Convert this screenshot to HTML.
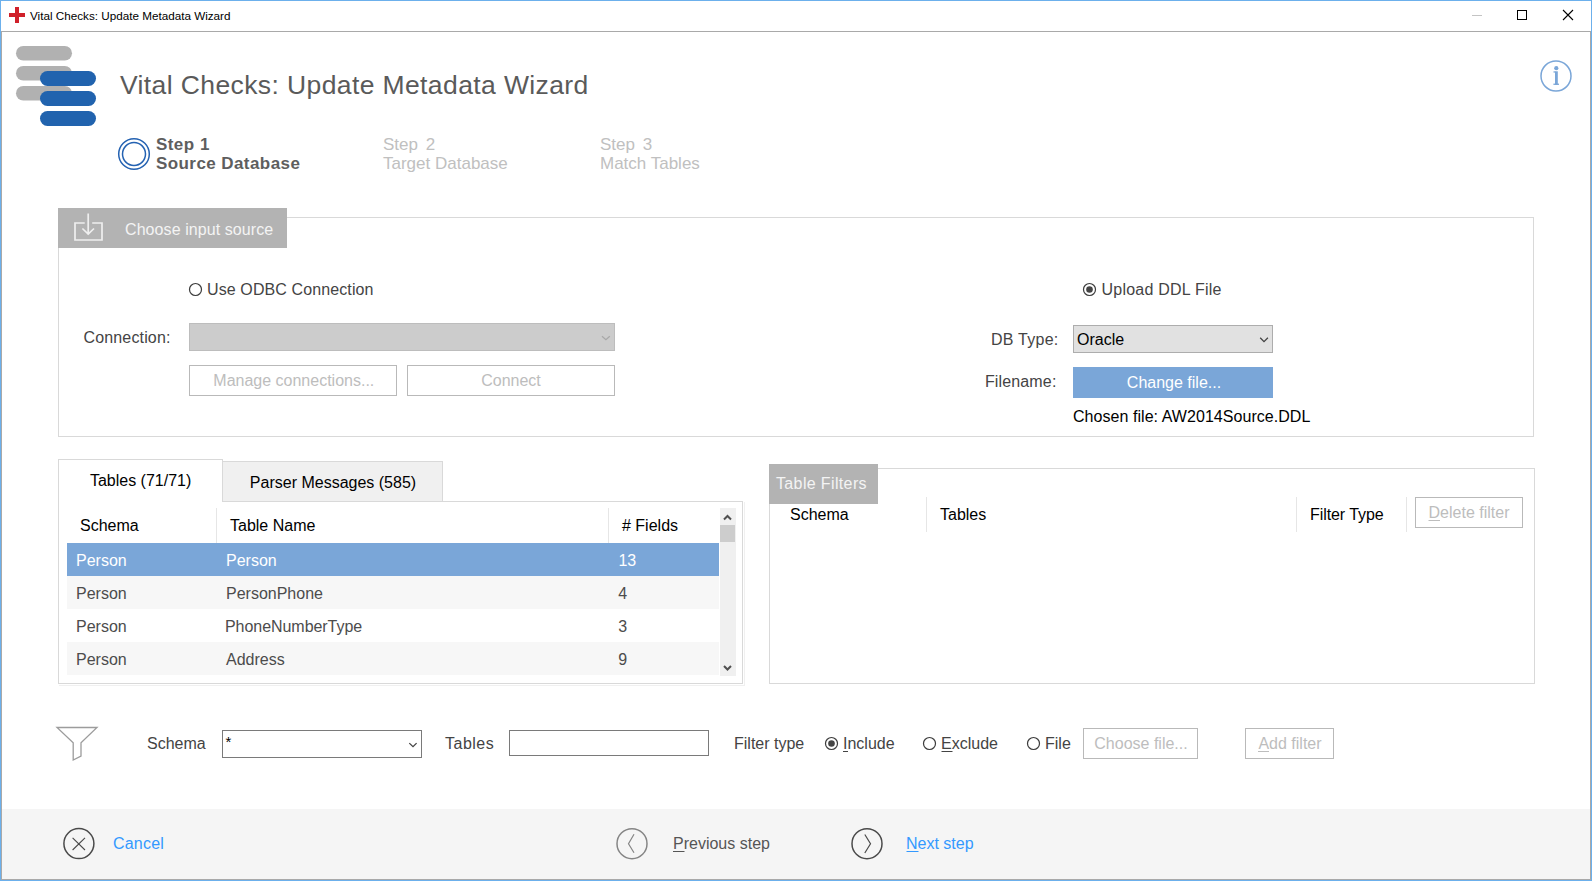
<!DOCTYPE html>
<html><head><meta charset="utf-8">
<style>
*{box-sizing:border-box;margin:0;padding:0}
html,body{width:1592px;height:881px;overflow:hidden;background:#fff}
body{position:relative;font-family:"Liberation Sans",sans-serif}
.a{position:absolute}
#svg{position:absolute;left:0;top:0}
text{font-family:"Liberation Sans",sans-serif}
</style></head><body>
<!-- window frame -->
<div class="a" style="left:0;top:0;width:1592px;height:881px;border:1px solid #6cb0ec"></div>
<div class="a" style="left:1px;top:31px;width:1590px;height:849px;border:1px solid #a9a9a9;border-bottom:none"></div>
<!-- footer -->
<div class="a" style="left:2px;top:809px;width:1588px;height:70px;background:#f5f5f5"></div>
<div class="a" style="left:1px;top:879px;width:1590px;height:1px;background:#a9a9a9"></div>

<!-- choose input source panel -->
<div class="a" style="left:58px;top:217px;width:1476px;height:220px;border:1px solid #d9d9d9"></div>
<div class="a" style="left:58px;top:208px;width:229px;height:40px;background:#b3b3b3"></div>

<!-- connection combo -->
<div class="a" style="left:189px;top:323px;width:426px;height:28px;background:#cccccc;border:1px solid #bdbdbd"></div>
<div class="a" style="left:189px;top:365px;width:208px;height:31px;border:1px solid #b9b9b9"></div>
<div class="a" style="left:407px;top:365px;width:208px;height:31px;border:1px solid #b9b9b9"></div>
<!-- db type combo -->
<div class="a" style="left:1073px;top:325px;width:200px;height:28px;background:#e1e1e1;border:1px solid #adadad"></div>
<div class="a" style="left:1073px;top:367px;width:200px;height:31px;background:#7aa6d8"></div>

<!-- tabs panel -->
<div class="a" style="left:58px;top:501px;width:685px;height:183px;border:1px solid #d9d9d9"></div>
<div class="a" style="left:222px;top:461px;width:221px;height:41px;background:#f0f0f0;border:1px solid #d9d9d9"></div>
<div class="a" style="left:58px;top:459px;width:165px;height:43px;background:#fff;border:1px solid #d9d9d9;border-bottom:none"></div>
<div class="a" style="left:744px;top:502px;width:1px;height:184px;background:#f0f0f0"></div>
<div class="a" style="left:59px;top:685px;width:686px;height:1px;background:#f0f0f0"></div>
<!-- grid rows -->
<div class="a" style="left:67px;top:543px;width:652px;height:33px;background:#7aa6d8"></div>
<div class="a" style="left:67px;top:576px;width:652px;height:33px;background:#f7f7f7"></div>
<div class="a" style="left:67px;top:642px;width:652px;height:33px;background:#f7f7f7"></div>
<div class="a" style="left:216px;top:508px;width:1px;height:35px;background:#e6e6e6"></div>
<div class="a" style="left:608px;top:508px;width:1px;height:35px;background:#e6e6e6"></div>
<!-- scrollbar -->
<div class="a" style="left:720px;top:508px;width:16px;height:168px;background:#f0f0f0"></div>
<div class="a" style="left:720px;top:525px;width:15px;height:17px;background:#cdcdcd"></div>

<!-- table filters panel -->
<div class="a" style="left:769px;top:468px;width:766px;height:216px;border:1px solid #d9d9d9"></div>
<div class="a" style="left:769px;top:464px;width:109px;height:40px;background:#b3b3b3"></div>
<div class="a" style="left:926px;top:497px;width:1px;height:35px;background:#e6e6e6"></div>
<div class="a" style="left:1296px;top:497px;width:1px;height:35px;background:#e6e6e6"></div>
<div class="a" style="left:1406px;top:497px;width:1px;height:35px;background:#e6e6e6"></div>
<div class="a" style="left:1415px;top:497px;width:108px;height:31px;border:1px solid #b9b9b9"></div>

<!-- filter row -->
<div class="a" style="left:222px;top:730px;width:200px;height:28px;border:1px solid #7a7a7a"></div>
<div class="a" style="left:509px;top:730px;width:200px;height:26px;border:1px solid #7a7a7a"></div>
<div class="a" style="left:1083px;top:728px;width:115px;height:31px;border:1px solid #b9b9b9"></div>
<div class="a" style="left:1245px;top:728px;width:89px;height:31px;border:1px solid #b9b9b9"></div>

<svg id="svg" width="1592" height="881" viewBox="0 0 1592 881">
 <!-- title bar -->
 <rect x="9" y="13" width="16" height="4" fill="#d0202a"/>
 <rect x="15" y="7" width="4" height="16" fill="#d0202a"/>
 <text x="30" y="19.7" font-size="11.7" fill="#000">Vital Checks: Update Metadata Wizard</text>
 <rect x="1472" y="15" width="10" height="1" fill="#c4c4c4"/>
 <rect x="1517.5" y="10.5" width="9" height="9" fill="none" stroke="#000" stroke-width="1"/>
 <path d="M1563 10 L1573 20 M1573 10 L1563 20" stroke="#000" stroke-width="1.1"/>

 <!-- logo -->
 <g fill="#b1b1b1">
  <rect x="16" y="46" width="56" height="14.5" rx="7.25"/>
  <rect x="16" y="66" width="56" height="14.5" rx="7.25"/>
  <rect x="16" y="86" width="56" height="14.5" rx="7.25"/>
 </g>
 <g fill="#2163ae">
  <rect x="40" y="71" width="56" height="15" rx="7.5"/>
  <rect x="40" y="91" width="56" height="15" rx="7.5"/>
  <rect x="40" y="111" width="56" height="15" rx="7.5"/>
 </g>
 <text x="120" y="94" font-size="26.5" fill="#5a5a5a" letter-spacing="0.39">Vital Checks: Update Metadata Wizard</text>

 <!-- info -->
 <circle cx="1556" cy="76" r="15" fill="none" stroke="#7aa6d8" stroke-width="1.5"/>
 <circle cx="1556.3" cy="68.2" r="2.1" fill="#7aa6d8"/>
 <g fill="#7aa6d8"><rect x="1555" y="71.3" width="2.8" height="13.5"/><rect x="1553.5" y="71.3" width="2" height="1.3"/><rect x="1553.4" y="83.6" width="5.6" height="1.3"/></g>

 <!-- steps -->
 <circle cx="134" cy="154" r="15.3" fill="none" stroke="#2462b2" stroke-width="1.5"/>
 <circle cx="134" cy="154" r="11.5" fill="none" stroke="#2462b2" stroke-width="1.5"/>
 <text x="156" y="150" font-size="17" font-weight="700" fill="#5e5e5e" letter-spacing="0.4" word-spacing="0.5">Step 1</text>
 <text x="156" y="168.5" font-size="17" font-weight="700" fill="#5e5e5e" letter-spacing="0.42">Source Database</text>
 <text x="383" y="150" font-size="17" fill="#c0c0c0" word-spacing="3">Step 2</text>
 <text x="383" y="168.5" font-size="17" fill="#c0c0c0">Target Database</text>
 <text x="600" y="150" font-size="17" fill="#c0c0c0" word-spacing="3">Step 3</text>
 <text x="600" y="168.5" font-size="17" fill="#c0c0c0">Match Tables</text>

 <!-- choose input header -->
 <g stroke="#efefef" stroke-width="1.7" fill="none">
  <path d="M84.7 223 H75 V240 H102 V223 H92.2"/>
  <path d="M88.2 213.5 V233.5 M82.4 228.5 L88.2 234 L94 228.5"/>
 </g>
 <text x="125" y="235" font-size="16" fill="#f4f4f4" letter-spacing="0.08">Choose input source</text>

 <!-- ODBC side -->
 <circle cx="195.5" cy="289.5" r="6" fill="none" stroke="#3c3c3c" stroke-width="1.2"/>
 <text x="207" y="295" font-size="16" fill="#444" letter-spacing="0.11">Use ODBC Connection</text>
 <text x="83.5" y="343" font-size="16" fill="#444" letter-spacing="0.15">Connection:</text>
 <path d="M602 336.2 L605.9 339.8 L609.8 336.2" stroke="#a8a8a8" stroke-width="1.2" fill="none"/>
 <text x="293.8" y="386" font-size="16" fill="#bdbdbd" text-anchor="middle">Manage connections...</text>
 <text x="511" y="386" font-size="16" fill="#bdbdbd" text-anchor="middle">Connect</text>

 <!-- DDL side -->
 <circle cx="1089.5" cy="289.5" r="6" fill="none" stroke="#3c3c3c" stroke-width="1.2"/>
 <circle cx="1089.5" cy="289.5" r="3.3" fill="#444"/>
 <text x="1101.5" y="295" font-size="16" fill="#444" letter-spacing="0.23">Upload DDL File</text>
 <text x="1058.5" y="345" font-size="16" fill="#444" text-anchor="end" letter-spacing="0.25">DB Type:</text>
 <text x="1077" y="345" font-size="16" fill="#000">Oracle</text>
 <path d="M1260.2 337.8 L1264 341.6 L1267.9 337.8" stroke="#444" stroke-width="1.3" fill="none"/>
 <text x="1056.5" y="387" font-size="16" fill="#444" text-anchor="end" letter-spacing="0.15">Filename:</text>
 <text x="1174" y="388" font-size="16" fill="#fff" text-anchor="middle">Change file...</text>
 <text x="1073" y="422" font-size="16" fill="#000" letter-spacing="0.05">Chosen file: AW2014Source.DDL</text>

 <!-- tabs -->
 <text x="140.6" y="486" font-size="16" fill="#000" text-anchor="middle">Tables (71/71)</text>
 <text x="333" y="488" font-size="16" fill="#000" text-anchor="middle">Parser Messages (585)</text>
 <text x="80" y="531" font-size="16" fill="#000">Schema</text>
 <text x="230" y="531" font-size="16" fill="#000">Table Name</text>
 <text x="622" y="531" font-size="16" fill="#000"># Fields</text>
 <g font-size="16">
  <text x="76" y="566" fill="#fff">Person</text><text x="226" y="566" fill="#fff">Person</text><text x="618.4" y="566" fill="#fff">13</text>
  <text x="76" y="599" fill="#4c4c4c">Person</text><text x="226" y="599" fill="#4c4c4c">PersonPhone</text><text x="618.2" y="599" fill="#4c4c4c">4</text>
  <text x="76" y="632" fill="#4c4c4c">Person</text><text x="225" y="632" fill="#4c4c4c" letter-spacing="-0.05">PhoneNumberType</text><text x="618.2" y="632" fill="#4c4c4c">3</text>
  <text x="76" y="665" fill="#4c4c4c">Person</text><text x="226" y="665" fill="#4c4c4c">Address</text><text x="618.2" y="665" fill="#4c4c4c">9</text>
 </g>
 <path d="M724 519.5 L727.5 516 L731 519.5" stroke="#505050" stroke-width="2" fill="none"/>
 <path d="M724 666 L727.5 669.5 L731 666" stroke="#505050" stroke-width="2" fill="none"/>

 <!-- table filters -->
 <text x="776" y="489" font-size="16" fill="#f4f4f4" letter-spacing="0.36">Table Filters</text>
 <text x="790" y="520" font-size="16" fill="#000">Schema</text>
 <text x="940" y="520" font-size="16" fill="#000">Tables</text>
 <text x="1310" y="520" font-size="16" fill="#000" letter-spacing="-0.08">Filter Type</text>
 <text x="1469" y="518" font-size="16" fill="#bdbdbd" text-anchor="middle">Delete filter</text>

 <!-- filter row -->
 <g fill="none" stroke="#9c9c9c" stroke-width="1.3">
  <path d="M57 727.5 H97 L81 742.8 V756 L73.2 760 V742.8 Z"/>
 </g>
 <text x="147" y="749" font-size="16" fill="#444">Schema</text>
 <text x="225.5" y="747.1" font-size="15" fill="#000">*</text>
 <path d="M409.3 743.1 L413 746.6 L416.6 743.1" stroke="#444" stroke-width="1.3" fill="none"/>
 <text x="445" y="749" font-size="16" fill="#444" letter-spacing="0.5">Tables</text>
 <text x="734" y="749" font-size="16" fill="#444">Filter type</text>
 <circle cx="831.5" cy="743.5" r="6" fill="none" stroke="#3c3c3c" stroke-width="1.2"/>
 <circle cx="831.5" cy="743.5" r="3.3" fill="#444"/>
 <text x="843" y="749" font-size="16" fill="#444">Include</text>
 <circle cx="929.5" cy="743.5" r="6" fill="none" stroke="#3c3c3c" stroke-width="1.2"/>
 <text x="941" y="749" font-size="16" fill="#444">Exclude</text>
 <circle cx="1033.5" cy="743.5" r="6" fill="none" stroke="#3c3c3c" stroke-width="1.2"/>
 <text x="1045" y="749" font-size="16" fill="#444">File</text>
 <text x="1141" y="749" font-size="16" fill="#bdbdbd" text-anchor="middle">Choose file...</text>
 <text x="1290" y="749" font-size="16" fill="#bdbdbd" text-anchor="middle">Add filter</text>

 <!-- footer -->
 <circle cx="78.9" cy="843.6" r="15" fill="none" stroke="#4a4a4a" stroke-width="1.5"/>
 <path d="M72.6 837.8 L85 850 M85 837.8 L72.6 850" stroke="#4a4a4a" stroke-width="1.1"/>
 <text x="113" y="849" font-size="16" fill="#3399ff" letter-spacing="0.2">Cancel</text>
 <circle cx="632" cy="843.7" r="15" fill="none" stroke="#858585" stroke-width="1.5"/>
 <path d="M634 834.3 L628.5 843.7 L634 852.8" stroke="#858585" stroke-width="1.2" fill="none"/>
 <text x="673" y="849" font-size="16" fill="#555">Previous step</text>
 <circle cx="867" cy="843.7" r="15" fill="none" stroke="#4a4a4a" stroke-width="1.5"/>
 <path d="M864.8 834.5 L870.5 843.7 L864.8 853" stroke="#4a4a4a" stroke-width="1.2" fill="none"/>
 <text x="906" y="849" font-size="16" fill="#3399ff">Next step</text>

 <g fill="#444">
  <rect x="843" y="751" width="5" height="1"/>
  <rect x="941.5" y="751" width="11" height="1"/>
 </g>
 <rect x="1258" y="751" width="11" height="1" fill="#bdbdbd"/>
 <rect x="1428.5" y="520" width="11.5" height="1" fill="#bdbdbd"/>
 <rect x="673" y="851" width="11.5" height="1" fill="#555"/>
 <rect x="906.5" y="851" width="12" height="1" fill="#3399ff"/>
</svg>
</body></html>
